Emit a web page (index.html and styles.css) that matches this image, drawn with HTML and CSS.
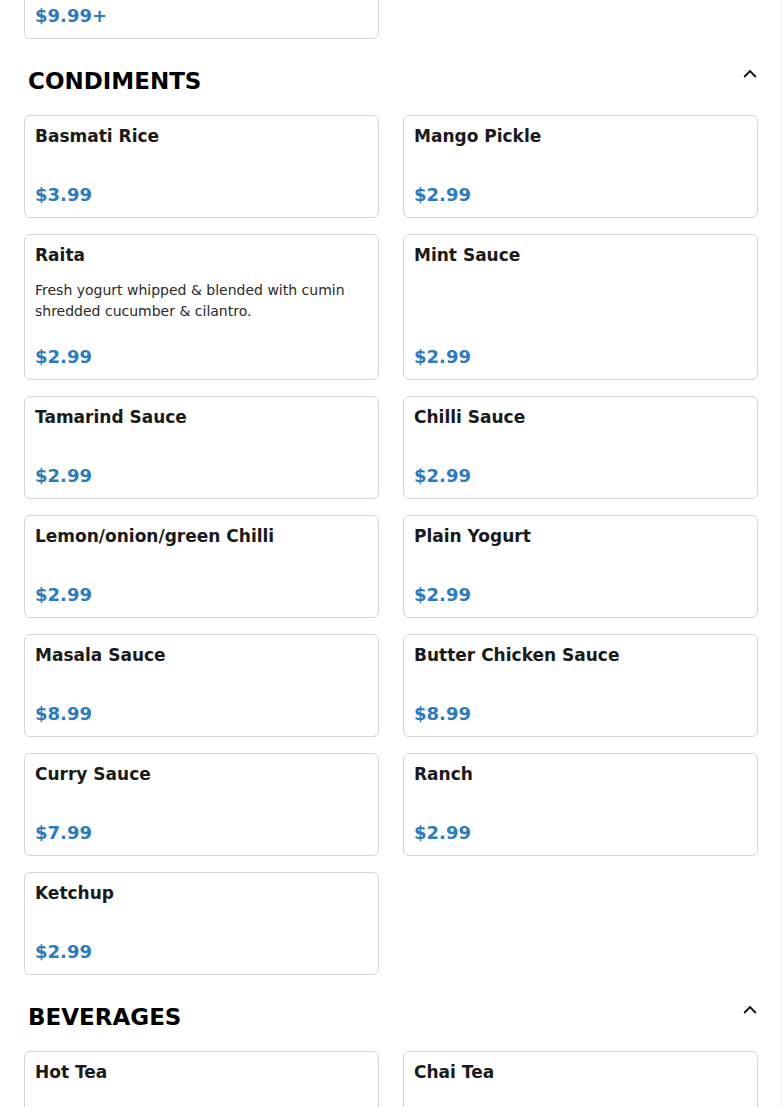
FILE: index.html
```html
<!DOCTYPE html>
<html lang="en">
<head>
<meta charset="utf-8">
<title>Menu</title>
<link rel="stylesheet" href="styles.css">
</head>
<body>
<main class="menu">
  <section class="section section-prev">
    <div class="grid">
      <article class="card">
        <h3 class="item-name">Family Combo</h3>
        <p class="price">$9.99+</p>
      </article>
    </div>
  </section>

  <section class="section">
    <header class="section-head">
      <h2 class="section-title">CONDIMENTS</h2>
      <button class="toggle" aria-label="Collapse">
        <svg width="14" height="14" viewBox="0 0 14 14"><path d="M1.2 10 L7 4.2 L12.8 10" fill="none" stroke="#111" stroke-width="1.9"/></svg>
      </button>
    </header>
    <div class="grid">
      <article class="card"><h3 class="item-name">Basmati Rice</h3><p class="price">$3.99</p></article>
      <article class="card"><h3 class="item-name">Mango Pickle</h3><p class="price">$2.99</p></article>
      <article class="card"><h3 class="item-name">Raita</h3><p class="desc">Fresh yogurt whipped &amp; blended with cumin shredded cucumber &amp; cilantro.</p><p class="price">$2.99</p></article>
      <article class="card"><h3 class="item-name">Mint Sauce</h3><p class="price">$2.99</p></article>
      <article class="card"><h3 class="item-name">Tamarind Sauce</h3><p class="price">$2.99</p></article>
      <article class="card"><h3 class="item-name">Chilli Sauce</h3><p class="price">$2.99</p></article>
      <article class="card"><h3 class="item-name">Lemon/onion/green Chilli</h3><p class="price">$2.99</p></article>
      <article class="card"><h3 class="item-name">Plain Yogurt</h3><p class="price">$2.99</p></article>
      <article class="card"><h3 class="item-name">Masala Sauce</h3><p class="price">$8.99</p></article>
      <article class="card"><h3 class="item-name">Butter Chicken Sauce</h3><p class="price">$8.99</p></article>
      <article class="card"><h3 class="item-name">Curry Sauce</h3><p class="price">$7.99</p></article>
      <article class="card"><h3 class="item-name">Ranch</h3><p class="price">$2.99</p></article>
      <article class="card"><h3 class="item-name">Ketchup</h3><p class="price">$2.99</p></article>
    </div>
  </section>

  <section class="section">
    <header class="section-head">
      <h2 class="section-title">BEVERAGES</h2>
      <button class="toggle" aria-label="Collapse">
        <svg width="14" height="14" viewBox="0 0 14 14"><path d="M1.2 10 L7 4.2 L12.8 10" fill="none" stroke="#111" stroke-width="1.9"/></svg>
      </button>
    </header>
    <div class="grid">
      <article class="card"><h3 class="item-name">Hot Tea</h3><p class="price">$1.99</p></article>
      <article class="card"><h3 class="item-name">Chai Tea</h3><p class="price">$2.99</p></article>
    </div>
  </section>
</main>
</body>
</html>
```

FILE: styles.css
```css
* { box-sizing: border-box; }

html, body {
  margin: 0;
  padding: 0;
  background: #ffffff;
}

body {
  font-family: "DejaVu Sans", Verdana, sans-serif;
  color: #1a1a1a;
  min-height: 100vh;
  box-shadow: inset -1px 0 0 #f0f0f0;
  overflow: hidden;
}

.menu {
  padding: 0 24px;
  margin-top: -64px;
}

.section-head {
  display: flex;
  justify-content: space-between;
  align-items: flex-start;
  padding: 0 1px 0 4px;
  margin: 26px 0 18px;
}

.section-title {
  margin: 0;
  font-size: 23px;
  line-height: 32px;
  font-weight: bold;
  color: #000;
  letter-spacing: 0;
}

.toggle {
  border: none;
  background: none;
  padding: 0;
  margin: 2px 0 0;
  width: 14px;
  height: 14px;
  display: flex;
  cursor: pointer;
}

.grid {
  display: grid;
  grid-template-columns: 1fr 1fr;
  column-gap: 24px;
  row-gap: 16px;
}

.card {
  border: 1px solid #d4d4d4;
  border-radius: 6px;
  padding: 8px 10px 7px;
  min-height: 103px;
  display: flex;
  flex-direction: column;
  background: #fff;
}

.item-name {
  margin: 0;
  font-size: 17px;
  line-height: 24px;
  font-weight: bold;
  color: #1a1a1a;
}

.desc {
  margin: 13px 0 20px;
  font-size: 14px;
  line-height: 21px;
  color: #2a2a2a;
}

.price {
  margin: auto 0 0;
  font-size: 18px;
  line-height: 30px;
  font-weight: bold;
  color: #2b7bbf;
}
```
